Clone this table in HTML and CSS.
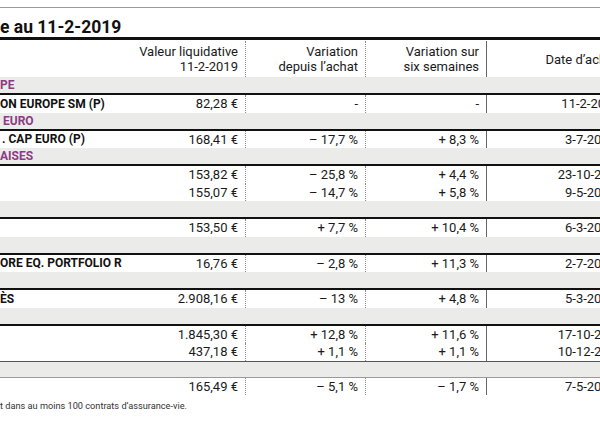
FILE: index.html
```html
<!DOCTYPE html>
<html lang="fr">
<head>
<meta charset="utf-8">
<link rel="stylesheet" href="styles.css">
</head>
<body>
<div class="page">
  <div class="title">e au 11-2-2019</div>
  <div class="row head">
    <div class="c1"></div>
    <div class="c2">Valeur liquidative<br>11-2-2019</div>
    <div class="c3">Variation<br>depuis l’achat</div>
    <div class="c4">Variation sur<br>six semaines</div>
    <div class="c5">Date d’achat</div>
  </div>

  <div class="band">PE</div>
  <div class="group">
    <div class="row"><div class="c1">ON EUROPE SM (P)</div><div class="c2">82,28 €</div><div class="c3">-</div><div class="c4">-</div><div class="c5">11-2-2019</div></div>
  </div>

  <div class="band"><span class="ind">EURO</span></div>
  <div class="group">
    <div class="row"><div class="c1"><span class="ind2">. CAP EURO (P)</span></div><div class="c2">168,41 €</div><div class="c3">– 17,7 %</div><div class="c4">+ 8,3 %</div><div class="c5">3-7-2018</div></div>
  </div>

  <div class="band">AISES</div>
  <div class="group">
    <div class="row"><div class="c1"></div><div class="c2">153,82 €</div><div class="c3">– 25,8 %</div><div class="c4">+ 4,4 %</div><div class="c5">23-10-2018</div></div>
    <div class="row"><div class="c1"></div><div class="c2">155,07 €</div><div class="c3">– 14,7 %</div><div class="c4">+ 5,8 %</div><div class="c5">9-5-2018</div></div>
  </div>

  <div class="band"></div>
  <div class="group">
    <div class="row"><div class="c1"></div><div class="c2">153,50 €</div><div class="c3">+ 7,7 %</div><div class="c4">+ 10,4 %</div><div class="c5">6-3-2018</div></div>
  </div>

  <div class="band"></div>
  <div class="group">
    <div class="row"><div class="c1">ORE EQ. PORTFOLIO R</div><div class="c2">16,76 €</div><div class="c3">– 2,8 %</div><div class="c4">+ 11,3 %</div><div class="c5">2-7-2018</div></div>
  </div>

  <div class="band"></div>
  <div class="group">
    <div class="row"><div class="c1">ÈS</div><div class="c2">2.908,16 €</div><div class="c3">– 13 %</div><div class="c4">+ 4,8 %</div><div class="c5">5-3-2018</div></div>
  </div>

  <div class="band"></div>
  <div class="group">
    <div class="row"><div class="c1"></div><div class="c2">1.845,30 €</div><div class="c3">+ 12,8 %</div><div class="c4">+ 11,6 %</div><div class="c5">17-10-2018</div></div>
    <div class="row"><div class="c1"></div><div class="c2">437,18 €</div><div class="c3">+ 1,1 %</div><div class="c4">+ 1,1 %</div><div class="c5">10-12-2018</div></div>
  </div>

  <div class="band last"></div>
  <div class="group lastgroup">
    <div class="row"><div class="c1"></div><div class="c2">165,49 €</div><div class="c3">– 5,1 %</div><div class="c4">– 1,7 %</div><div class="c5">7-5-2018</div></div>
  </div>

  <div class="note">t dans au moins 100 contrats d’assurance-vie.</div>
</div>
</body>
</html>
```

FILE: styles.css
```css
* { box-sizing: border-box; }
html, body { margin: 0; padding: 0; background: #fff; }
body { overflow: hidden; width: 600px; height: 422px; font-family: Roboto, "Liberation Sans", sans-serif; color: #1a1a1a; }
.page { width: 694px; margin-top: 7px; border-top: 1px solid #9a9a9a; }
.title { font-weight: 700; font-size: 17.5px; line-height: 20px; padding-top: 9px; padding-bottom: 0; border-bottom: 3px solid #111; color: #111; white-space: nowrap; }
.row { display: grid; grid-template-columns: 120px 125px 120px 121px 208px; height: 17.5px; font-size: 13px; }
.row > div { display: flex; align-items: center; white-space: nowrap; }
.row .c1 { font-weight: 700; font-size: 12px; color: #111; }
.row .c2, .row .c3, .row .c4 { justify-content: flex-end; padding-right: 7px; }
.row .c3, .row .c4 { border-left: 1px dotted #8a8a8a; }
.row .c5 { border-left: 1px solid #666; justify-content: center; }
.head { height: 37px; line-height: 15px; padding-top: 1px; }
.head > div { text-align: right; }
.head .c5 { text-align: center; padding-right: 18px; }
.band { height: 16px; background: #ebebe9; color: #8b3c84; font-weight: 700; font-size: 12px; line-height: 16px; white-space: nowrap; }
.group { border-top: 2px solid #111; }
.band.last { border-top: 1px solid #555; }
.group.lastgroup { border-top: 1.5px solid #9a9a9a; }
.ind { padding-left: 3px; }
.ind2 { padding-left: 2px; }
.note { font-size: 9.2px; line-height: 14px; margin-top: 4px; color: #333; white-space: nowrap; }
```
